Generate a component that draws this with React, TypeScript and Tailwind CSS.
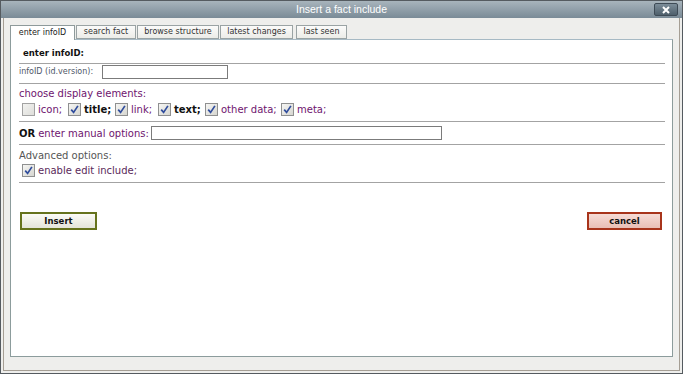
import React from "react";

const Box = ({ checked }: { checked?: boolean }) => (
  <span
    className={
      checked
        ? "inline-flex items-center justify-center w-[13px] h-[13px] shrink-0 border border-[#8f9090] bg-gradient-to-br from-[#f6f6f4] to-[#d6d6d0]"
        : "inline-flex items-center justify-center w-[13px] h-[13px] shrink-0 border border-[#a2a2a2] bg-gradient-to-br from-[#f2f2f0] to-[#dededa]"
    }
  >
    {checked && (
      <svg width="9" height="9" viewBox="0 0 9 9">
        <path d="M1.2 4.6 L3.6 7.4 L7.9 0.9" stroke="#2f4c9c" strokeWidth="1.7" fill="none" />
      </svg>
    )}
  </span>
);

const Option = ({ label, checked, bold, w }: { label: string; checked?: boolean; bold?: boolean; w: string }) => (
  <div className={`flex items-center ${w}`}>
    <Box checked={checked} />
    <span className={bold ? "ml-[3px] font-bold text-[#111]" : "ml-[3px] text-[#6e146e]"}>{label}</span>
  </div>
);

const Rule = () => <div className="ml-[8px] mr-[7px] border-t border-[#a3a3a3]" />;

const tabs = [
  { name: "enter infoID", w: "w-[65px]", ml: "ml-0", active: true },
  { name: "search fact", w: "w-[60px]", ml: "ml-[1px]" },
  { name: "browse structure", w: "w-[82px]", ml: "ml-[1px]" },
  { name: "latest changes", w: "w-[73px]", ml: "ml-[1px]" },
  { name: "last seen", w: "w-[51px]", ml: "ml-[3px]" },
];

const App = () => {
  return (
    <div className="w-[683px] h-[374px] overflow-hidden border border-[#555b60] bg-[#eeeeec] font-['DejaVu_Sans',Verdana,sans-serif] flex flex-col">
      {/* title bar */}
      <div className="relative h-[17px] shrink-0 bg-gradient-to-b from-[#a8b4bc] to-[#7a8b97] flex items-center justify-center">
        <span className="font-['Liberation_Sans',Arial,sans-serif] text-[10.5px] text-white">Insert a fact include</span>
        <div className="absolute right-[4px] top-[2px] w-[24px] h-[13px] rounded-[2px] border border-[#3e4b56] bg-gradient-to-b from-[#7c8d99] to-[#4f606c] flex items-center justify-center">
          <svg width="8" height="8" viewBox="0 0 8 8">
            <path d="M1 1 L7 7 M7 1 L1 7" stroke="#ffffff" strokeWidth="2" />
          </svg>
        </div>
      </div>

      {/* body */}
      <div className="flex-1 mx-[2px] mb-[2px] border-l border-r border-b border-[#a59e94] px-[6px] pt-[7px] pb-[13px] flex flex-col">
        <div className="flex h-[14px] items-end relative z-10">
          {tabs.map((t) => (
            <div
              key={t.name}
              className={
                t.active
                  ? `${t.w} ${t.ml} h-[15px] -mb-[1px] bg-white border-t border-l border-r border-[#8e9a9b] flex items-center justify-center text-[8px] text-[#222]`
                  : `${t.w} ${t.ml} h-[14px] bg-gradient-to-b from-[#fbfbfa] to-[#ecece8] border border-[#9aa3a4] flex items-center justify-center text-[8px] text-[#333]`
              }
            >
              {t.name}
            </div>
          ))}
        </div>

        <div className="flex-1 bg-white border border-[#8c9c9c] border-t-[#a6b9c4] flex flex-col">
          <div className="h-[23px] pl-[12px] pt-[3px] flex items-center text-[8.5px] font-bold text-[#111]">enter infoID:</div>
          <Rule />
          <div className="h-[19px] pl-[8px] pt-[1px] flex items-start">
            <span className="h-[14px] flex items-center text-[8px] text-[#4e5868]">infoID (id.version):</span>
            <div className="ml-[9px] w-[126px] h-[14px] border border-[#7b7b7b] bg-white" />
          </div>
          <Rule />
          <div className="pl-[8px] pt-[3px] pb-[5px] text-[10px]">
            <div className="h-[12px] flex items-center text-[#6e146e]">choose display elements:</div>
            <div className="mt-[4px] ml-[3px] flex items-center h-[13px]">
              <Option label="icon;" w="w-[46px]" />
              <Option label="title;" w="w-[47px]" checked bold />
              <Option label="link;" w="w-[43px]" checked />
              <Option label="text;" w="w-[47px]" checked bold />
              <Option label="other data;" w="w-[76px]" checked />
              <Option label="meta;" w="w-[50px]" checked />
            </div>
          </div>
          <Rule />
          <div className="h-[22px] pl-[8px] flex items-center text-[10px]">
            <span className="font-bold text-[#111]">OR</span>
            <span className="ml-[3px] text-[#6e146e]">enter manual options:</span>
            <div className="ml-[2px] w-[291px] h-[14px] border border-[#7b7b7b] bg-white" />
          </div>
          <Rule />
          <div className="pl-[8px] pt-[4px] pb-[5px] text-[10px]">
            <div className="h-[12px] flex items-center text-[#555]">Advanced options:</div>
            <div className="mt-[3px] ml-[3px] flex items-center h-[13px]">
              <Box checked />
              <span className="ml-[3px] text-[#5a2a5a]">enable edit include;</span>
            </div>
          </div>
          <Rule />
          <div className="mt-[29px] ml-[9px] mr-[10px] flex justify-between">
            <button className="w-[77px] h-[18px] border-2 border-[#66731d] bg-gradient-to-b from-[#fbfbf6] to-[#e4e4da] text-[8.5px] font-bold text-[#111] flex items-center justify-center">
              Insert
            </button>
            <button className="w-[75px] h-[18px] border-2 border-[#a8341b] bg-gradient-to-b from-[#f6dcd6] to-[#e9bfb5] text-[8.5px] font-bold text-[#111] flex items-center justify-center">
              cancel
            </button>
          </div>
        </div>
      </div>
    </div>
  );
};

export default App;
